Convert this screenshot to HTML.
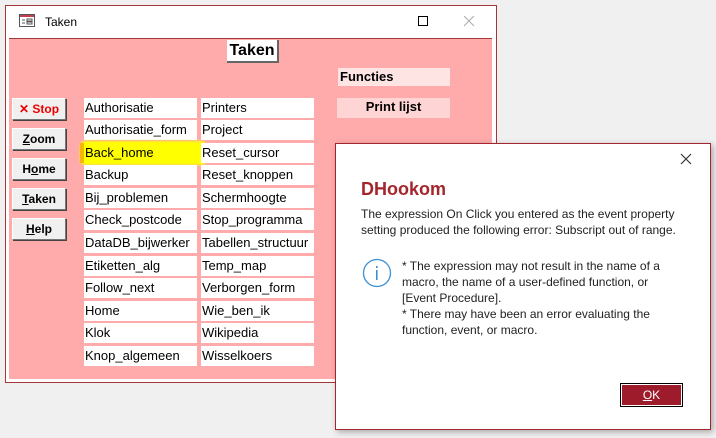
<!DOCTYPE html>
<html><head><meta charset="utf-8"><style>
*{margin:0;padding:0;box-sizing:border-box}
body{width:716px;height:438px;background:#f0f0f0;position:relative;overflow:hidden;font-family:"Liberation Sans",sans-serif}
.a{position:absolute}
.win{left:5px;top:5px;width:492px;height:378px;border:1px solid #a4373a;background:#fff}
.pink{left:9px;top:38px;width:483px;height:341px;background:#ffabab;border-top:1px solid #a4373a}
.cell{position:absolute;background:#fff;height:20px;font-size:13px;line-height:20px;padding-left:1px;color:#000;white-space:nowrap;overflow:hidden}
.btn{position:absolute;left:12px;width:54px;height:22px;background:#f0f0f0;border:1px solid #fff;border-right-color:#777;border-bottom-color:#777;box-shadow:1px 1px 0 #444;font-size:12px;font-weight:bold;text-align:center;line-height:20px}
.dlg{left:335px;top:143px;width:376px;height:287px;background:#fff;border:1px solid #a4262c;box-shadow:2px 2px 6px rgba(0,0,0,.3)}
.t{font-size:12px;color:#222;line-height:16px}
</style></head><body>
<div class="a win"></div>
<svg class="a" style="left:19px;top:14px" width="17" height="14"><rect x="0.5" y="0.5" width="15" height="12" fill="#fff" stroke="#555"/><rect x="1" y="1" width="14" height="2" fill="#c04050"/><path d="M3 6h3M3 9h3M8 5h5v2h-5zM8 8h5v2h-5z" stroke="#555" fill="none"/></svg>
<div class="a" style="left:45px;top:15px;font-size:12px;color:#000">Taken</div>
<svg class="a" style="left:417px;top:15px" width="12" height="12"><rect x="1.5" y="1.5" width="9" height="9" fill="none" stroke="#000" stroke-width="1"/></svg>
<svg class="a" style="left:463px;top:15px" width="12" height="12"><path d="M1 1L11 11M11 1L1 11" stroke="#aaa"/></svg>
<div class="a pink"></div>
<div class="a" style="left:227px;top:40px;width:52px;height:23px;background:#fff;border-right:2px solid #666;border-bottom:2px solid #666;font-size:16px;font-weight:bold;text-align:center;line-height:21px">Taken</div>
<div class="a" style="left:338px;top:68px;width:112px;height:18px;background:#ffe4e4;font-size:13px;font-weight:bold;line-height:18px;padding-left:2px">Functies</div>
<div class="a" style="left:337px;top:98px;width:113px;height:20px;background:#ffd4d4;font-size:13px;font-weight:bold;line-height:18px;text-align:center">Print lijst</div>
<div class="btn" style="top:98px;color:#e00">✕ Stop</div>
<div class="btn" style="top:128px"><u>Z</u>oom</div>
<div class="btn" style="top:158px">H<u>o</u>me</div>
<div class="btn" style="top:188px"><u>T</u>aken</div>
<div class="btn" style="top:218px"><u>H</u>elp</div>
<div class="cell" style="left:84px;top:98px;width:113px">Authorisatie</div><div class="cell" style="left:201px;top:98px;width:113px">Printers</div>
<div class="cell" style="left:84px;top:120px;width:113px">Authorisatie_form</div><div class="cell" style="left:201px;top:120px;width:113px">Project</div>
<div class="a" style="left:80px;top:141px;width:127px;height:24px;background:#ffff00;border-radius:6px;filter:blur(1px)"></div>
<div class="a" style="left:80px;top:143px;width:4px;height:20px;background:#f5b800"></div>
<div class="cell" style="left:84px;top:143px;width:113px;background:transparent">Back_home</div><div class="cell" style="left:201px;top:143px;width:113px">Reset_cursor</div>
<div class="cell" style="left:84px;top:165px;width:113px">Backup</div><div class="cell" style="left:201px;top:165px;width:113px">Reset_knoppen</div>
<div class="cell" style="left:84px;top:188px;width:113px">Bij_problemen</div><div class="cell" style="left:201px;top:188px;width:113px">Schermhoogte</div>
<div class="cell" style="left:84px;top:210px;width:113px">Check_postcode</div><div class="cell" style="left:201px;top:210px;width:113px">Stop_programma</div>
<div class="cell" style="left:84px;top:233px;width:113px">DataDB_bijwerker</div><div class="cell" style="left:201px;top:233px;width:113px">Tabellen_structuur</div>
<div class="cell" style="left:84px;top:256px;width:113px">Etiketten_alg</div><div class="cell" style="left:201px;top:256px;width:113px">Temp_map</div>
<div class="cell" style="left:84px;top:278px;width:113px">Follow_next</div><div class="cell" style="left:201px;top:278px;width:113px">Verborgen_form</div>
<div class="cell" style="left:84px;top:301px;width:113px">Home</div><div class="cell" style="left:201px;top:301px;width:113px">Wie_ben_ik</div>
<div class="cell" style="left:84px;top:323px;width:113px">Klok</div><div class="cell" style="left:201px;top:323px;width:113px">Wikipedia</div>
<div class="cell" style="left:84px;top:346px;width:113px">Knop_algemeen</div><div class="cell" style="left:201px;top:346px;width:113px">Wisselkoers</div>
<div class="a dlg"></div>
<svg class="a" style="left:680px;top:153px" width="12" height="12"><path d="M1 1L11 11M11 1L1 11" stroke="#333" stroke-width="1.2"/></svg>
<div class="a" style="left:361px;top:179px;font-size:18px;font-weight:bold;color:#a4262c">DHookom</div>
<div class="a t" style="left:361px;top:206px;width:345px">The expression On Click you entered as the event property setting produced the following error: Subscript out of range.</div>
<svg class="a" style="left:362px;top:258px" width="30" height="30"><circle cx="15" cy="15" r="13.5" fill="none" stroke="#3a8fd6" stroke-width="1.3"/><rect x="14" y="8" width="1.6" height="2" fill="#3a8fd6"/><rect x="14" y="12" width="1.6" height="10" fill="#3a8fd6"/></svg>
<div class="a t" style="left:402px;top:258px;width:258px">* The expression may not result in the name of a macro, the name of a user-defined function, or [Event Procedure].<br>* There may have been an error evaluating the function, event, or macro.</div>
<div class="a" style="left:620px;top:383px;width:63px;height:24px;background:#9e1b2c;border:1px solid #000;box-shadow:inset 0 0 0 1px #fff;color:#fff;font-size:12px;text-align:center;line-height:22px"><u>O</u>K</div>
</body></html>
